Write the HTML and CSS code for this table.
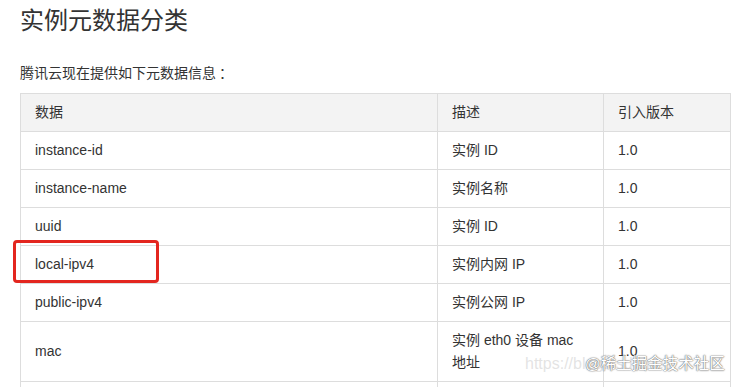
FILE: index.html
```html
<!DOCTYPE html>
<html lang="zh-CN">
<head>
<meta charset="utf-8">
<link rel="stylesheet" href="styles.css">
</head>
<body>
<div class="page">
  <h1 class="title">实例元数据分类</h1>
  <p class="intro">腾讯云现在提供如下元数据信息<span class="colon">：</span></p>
  <table class="meta">
    <colgroup>
      <col class="c1"><col class="c2"><col class="c3">
    </colgroup>
    <thead>
      <tr><th>数据</th><th>描述</th><th>引入版本</th></tr>
    </thead>
    <tbody>
      <tr><td>instance-id</td><td>实例 ID</td><td>1.0</td></tr>
      <tr><td>instance-name</td><td>实例名称</td><td>1.0</td></tr>
      <tr><td>uuid</td><td>实例 ID</td><td>1.0</td></tr>
      <tr><td>local-ipv4</td><td>实例内网 IP</td><td>1.0</td></tr>
      <tr><td>public-ipv4</td><td>实例公网 IP</td><td>1.0</td></tr>
      <tr><td>mac</td><td>实例 eth0 设备 mac 地址</td><td>1.0</td></tr>
      <tr class="empty"><td></td><td></td><td></td></tr>
    </tbody>
  </table>
  <div class="highlight"></div>
  <div class="wm-url">https://blog.csdn.net/</div>
  <div class="wm">@稀土掘金技术社区</div>
</div>
</body>
</html>
```
FILE: styles.css
```css
html, body {
  margin: 0;
  padding: 0;
  background: #fff;
}
body {
  font-family: "Liberation Sans", "Noto Sans CJK SC", sans-serif;
  color: #333;
  overflow: hidden;
}
.page {
  position: relative;
  padding: 0 0 0 20px;
  height: 387px;
  overflow: hidden;
}
.title {
  margin: 0;
  padding-top: 3px;
  font-size: 24px;
  line-height: 36px;
  font-weight: normal;
  color: #333;
}
.intro {
  margin: 22px 0 9px;
  font-size: 14px;
  line-height: 22px;
}
.colon {
  font-family: "Noto Sans CJK TC", sans-serif;
  padding-left: 3px;
}
.meta {
  border-collapse: collapse;
  width: 710px;
  table-layout: fixed;
  font-size: 14px;
}
.c1 { width: 417px; }
.c2 { width: 166px; }
.c3 { width: 127px; }
.meta th, .meta td {
  border: 1px solid #dddddd;
  padding: 7px 14px 8px;
  line-height: 22px;
  text-align: left;
  vertical-align: middle;
  font-weight: normal;
}
.meta th {
  background: #f3f3f3;
}
.meta .empty td {
  height: 22px;
}
.highlight {
  position: absolute;
  left: 13px;
  top: 240px;
  width: 140px;
  height: 37px;
  border: 3px solid #e3261f;
  border-radius: 4px;
}
.wm-url {
  position: absolute;
  left: 525px;
  top: 353px;
  font-size: 16px;
  line-height: 22px;
  color: rgba(200, 200, 200, 0.5);
  white-space: nowrap;
  width: 196px;
  overflow: hidden;
}
.wm {
  position: absolute;
  left: 585px;
  top: 353px;
  font-size: 15.5px;
  line-height: 22px;
  color: #fff;
  white-space: nowrap;
  text-shadow: 0 0 1px #777, 0 0 1px #777, 0 0 2px #999;
}
```
